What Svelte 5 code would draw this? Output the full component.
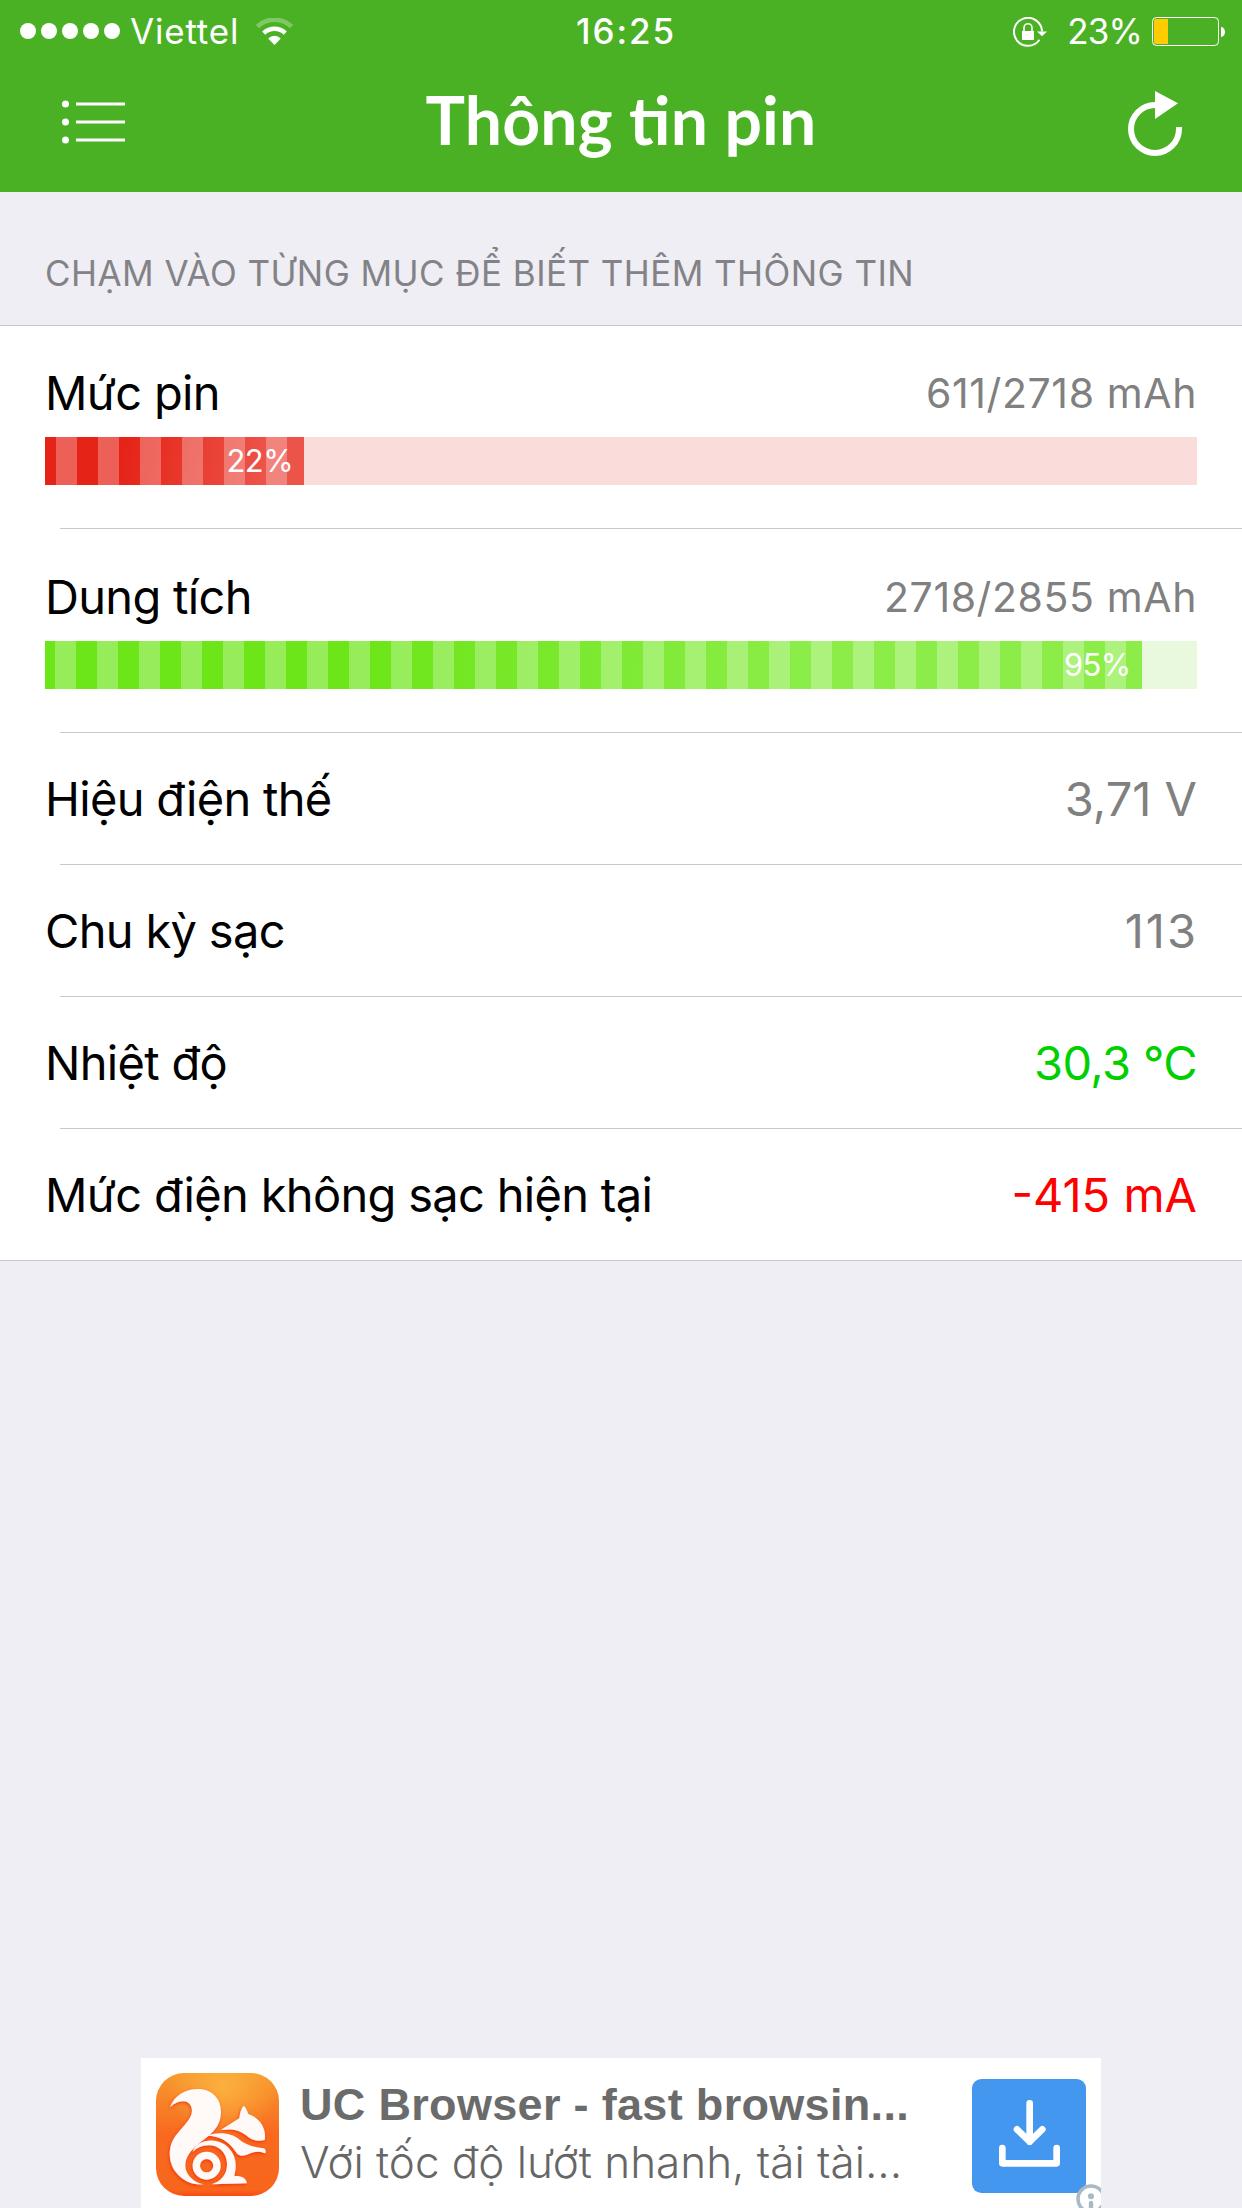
<script lang="ts">
  type Gauge = {
    label: string;
    value: string;
    percent: number;
    fill: number;
    tone: 'red' | 'green';
  };

  type Reading = {
    label: string;
    value: string;
    tone?: 'count' | 'ok' | 'alert';
  };

  const gauges: Gauge[] = [
    { label: 'Mức pin', value: '611/2718 mAh', percent: 22, fill: 22.48, tone: 'red' },
    { label: 'Dung tích', value: '2718/2855 mAh', percent: 95, fill: 95.2, tone: 'green' }
  ];

  const readings: Reading[] = [
    { label: 'Hiệu điện thế', value: '3,71 V' },
    { label: 'Chu kỳ sạc', value: '113', tone: 'count' },
    { label: 'Nhiệt độ', value: '30,3 °C', tone: 'ok' },
    { label: 'Mức điện không sạc hiện tại', value: '-415 mA', tone: 'alert' }
  ];
</script>

<div class="screen">
  <header>
    <div class="status">
      <div class="carrier">
        <div class="signal">
          {#each Array(5) as _, i (i)}
            <span class="dot"></span>
          {/each}
        </div>
        <span class="carrier-name">Viettel</span>
        <svg class="wifi" viewBox="0 0 37 27" width="37" height="27">
          <path d="M1.5 8.6a24.5 24.5 0 0 1 34 0" fill="none" stroke="#fff" stroke-opacity=".3" stroke-width="4.6" />
          <path d="M7.7 15.2a15.5 15.5 0 0 1 21.6 0" fill="none" stroke="#fff" stroke-width="4.4" />
          <path d="M12.2 20.4a9 9 0 0 1 12.6 0L18.5 27z" fill="#fff" />
        </svg>
      </div>
      <span class="clock">16:25</span>
      <div class="power">
        <svg class="lock" viewBox="0 0 34 30" width="34" height="30">
          <path d="M26.5 22.8a14 14 0 1 1 2.5-8.3" fill="none" stroke="#fff" stroke-width="2" />
          <path d="M24 14.5h10L29 19.2z" fill="#fff" />
          <rect x="9" y="14" width="12" height="9" fill="#fff" />
          <path d="M11 14.5v-3.8a4 4 0 0 1 8 0v3.8" fill="none" stroke="#fff" stroke-width="1.6" />
        </svg>
        <span class="power-text">23%</span>
        <svg class="battery" viewBox="0 0 74 29" width="74" height="29">
          <rect x=".5" y=".5" width="66" height="28" rx="4" fill="none" stroke="#fff" />
          <path d="M4 2h12v25H4a2 2 0 0 1-2-2V4a2 2 0 0 1 2-2z" fill="#fc0" />
          <path d="M69 10a4 5 0 0 1 0 10z" fill="#fff" />
        </svg>
      </div>
    </div>
    <div class="nav">
      <svg class="menu" viewBox="0 0 64 44" width="64" height="44">
        {#each [4, 22, 40] as y (y)}
          <circle cx="3.5" cy={y} r="3.5" fill="#fff" />
          <path d="M14 {y}h49" stroke="#fff" stroke-width="3" />
        {/each}
      </svg>
      <h1>Thông <span class="joined">t</span>in pin</h1>
      <svg class="refresh" viewBox="0 0 54 65" width="54" height="65">
        <path d="M27 14a24 24 0 1 0 24 24v-2" fill="none" stroke="#fff" stroke-width="6" />
        <path d="M27 0l23 12.3L27 28z" fill="#fff" />
      </svg>
    </div>
  </header>

  <h2>CHẠM VÀO TỪNG MỤC ĐỂ BIẾT THÊM THÔNG TIN</h2>

  <ul class="list">
    {#each gauges as gauge (gauge.label)}
      <li class="row row--gauge">
        <div class="line">
          <span class="label">{gauge.label}</span>
          <span class="value value--small">{gauge.value}</span>
        </div>
        <div class="track {gauge.tone}">
          <div class="fill" style="width: {gauge.fill}%">{gauge.percent}%</div>
        </div>
      </li>
    {/each}
    {#each readings as reading (reading.label)}
      <li class="row">
        <div class="line">
          <span class="label">{reading.label}</span>
          <span class="value {reading.tone ?? ''}">{reading.value}</span>
        </div>
      </li>
    {/each}
  </ul>

  <aside class="banner">
    <svg class="app-icon" viewBox="78 99 369 369" width="123" height="123">
      <defs>
        <linearGradient id="base" x1="0" y1="0" x2="0" y2="1">
          <stop offset="0" stop-color="#f79a2e" />
          <stop offset=".5" stop-color="#f8691f" />
          <stop offset=".95" stop-color="#f8661d" />
          <stop offset="1" stop-color="#fa4a14" />
        </linearGradient>
        <radialGradient id="glow" cx=".55" cy=".1" r=".45">
          <stop offset="0" stop-color="#fbb03e" />
          <stop offset="1" stop-color="#fbb03e" stop-opacity="0" />
        </radialGradient>
        <filter id="shade" x="-10%" y="-10%" width="120%" height="120%">
          <feDropShadow dx="-2" dy="4" stdDeviation="5" flood-color="#f02a00" flood-opacity=".85" />
        </filter>
      </defs>
      <rect x="78" y="99" width="369" height="369" rx="84" fill="url(#base)" />
      <rect x="78" y="99" width="369" height="369" rx="84" fill="url(#glow)" />
      <g fill="#fffaf8" filter="url(#shade)">
        <path d="M120 202C132 167 166 147 203 147c44 0 70 30 70 68 0 50-36 70-64 94-28 23-43 42-43 68 0 26 24 50 56 56-32 3-60-8-79-30-20-22-26-48-23-74 4-32 25-52 44-74 17-20 26-36 20-54-7-22-38-24-64 1z" />
        <path d="M272 270l56-35c2-18 6-30 13-38 7 7 11 15 14 25 31 10 56 41 49 78-23 6-41 0-56-14-20-17-44-20-76-16z" />
        <path d="M232 287c36-13 74-8 97 12 21 17 46 23 73 26 5 4 6 9 4 15-17-8-32-6-50 2-17 8-31 7-38-5-20-33-48-49-86-50z" />
        <path d="M188 335c8-22 32-35 62-33 42 3 72 42 67 84l-4 22c22-1 35 5 38 22l-107 3c30-9 48-31 47-62-1-34-26-56-56-55-19 1-34 7-47 19z" />
        <circle cx="230" cy="377" r="31" fill="none" stroke="#fffaf8" stroke-width="22" />
      </g>
    </svg>
    <div class="ad-text">
      <strong>UC Browser - fast browsin...</strong>
      <p>Với tốc độ lướt nhanh, tải tài...</p>
    </div>
    <svg class="download" viewBox="216 117 342 342" width="114" height="114">
      <rect x="216" y="117" width="342" height="342" rx="28" fill="#4497ee" />
      <g fill="none" stroke="#fff" stroke-width="20" stroke-linecap="round" stroke-linejoin="round">
        <path d="M389 190v115M351 268l38 37 38-37" />
        <path d="M307 324v46h163v-46" />
      </g>
    </svg>
    <svg class="info" viewBox="0 0 30 30" width="30" height="30">
      <circle cx="15" cy="15" r="13" fill="#fff" stroke="#a9bac4" stroke-width="3.6" />
      <circle cx="15" cy="12.3" r="3" fill="#a9bac4" />
      <path d="M15 19v7" stroke="#a9bac4" stroke-width="4.4" stroke-linecap="round" />
    </svg>
  </aside>
</div>

<style>
  :global(body) {
    margin: 0;
    background: #efeef4;
  }

  .screen {
    width: 1242px;
    height: 2208px;
    display: flex;
    flex-direction: column;
    overflow: hidden;
    background: #efeef4;
    font-family: Inter, 'Liberation Sans', sans-serif;
  }

  header {
    height: 192px;
    background: #4ab125;
    color: #fff;
  }

  .status {
    height: 60px;
    display: grid;
    grid-template-columns: 1fr auto 1fr;
    align-items: center;
    padding: 0 16px 0 20px;
    box-sizing: border-box;
    font-size: 35px;
    line-height: 62px;
  }

  .carrier,
  .power,
  .signal {
    display: flex;
    align-items: center;
  }

  .signal {
    gap: 5px;
  }

  .dot {
    width: 16px;
    height: 16px;
    border-radius: 50%;
    background: #fff;
  }

  .carrier-name {
    margin-left: 10px;
    letter-spacing: 0.8px;
  }

  .wifi {
    margin-left: 17px;
  }

  .clock {
    margin-left: 6px;
    font-weight: 500;
    letter-spacing: 1.9px;
  }

  .power {
    justify-content: flex-end;
  }

  .lock {
    margin-top: 1px;
  }

  .power-text {
    margin: 0 10px 0 20px;
    letter-spacing: -0.9px;
  }

  .battery {
    margin-top: 1px;
  }

  .nav {
    height: 132px;
    display: grid;
    grid-template-columns: 1fr auto 1fr;
    align-items: center;
    padding: 0 60px 8px;
    box-sizing: border-box;
  }

  .menu {
    margin-left: 2px;
  }

  .refresh {
    justify-self: end;
    margin-top: 2px;
  }

  h1 {
    margin: 0 0 4px;
    font-family: Lato, sans-serif;
    font-size: 66px;
    font-weight: 700;
    line-height: 80px;
    letter-spacing: 0.2px;
  }

  .joined {
    position: relative;
  }

  /* bridges the crossbar of the t to the stem of the i */
  .joined::after {
    content: '';
    position: absolute;
    top: 31px;
    left: calc(100% - 5px);
    width: 11px;
    height: 6px;
    background: #fff;
  }

  h2 {
    height: 133px;
    margin: 0;
    padding: 57px 45px 0;
    box-sizing: border-box;
    font-size: 35px;
    font-weight: 400;
    line-height: 48px;
    letter-spacing: 0.44px;
    color: #838387;
    white-space: nowrap;
  }

  .list {
    margin: 0;
    padding: 0;
    list-style: none;
    background: #fff;
    border-top: 1px solid #c8c7cc;
    border-bottom: 1px solid #c8c7cc;
  }

  .row {
    height: 132px;
    margin-left: 60px;
    padding-right: 45px;
    box-sizing: border-box;
    border-bottom: 1px solid #c8c7cc;
    display: flex;
    flex-direction: column;
    justify-content: center;
  }

  .row:last-child {
    height: 131px;
    border-bottom: none;
  }

  .row--gauge {
    height: 204px;
    justify-content: flex-end;
    padding-bottom: 43px;
  }

  .row--gauge:first-child {
    height: 203px;
  }

  .line {
    margin-left: -15px;
    display: flex;
    justify-content: space-between;
    align-items: center;
    line-height: 60px;
  }

  .row--gauge .line {
    margin-bottom: 14px;
  }

  .label,
  .value {
    font-size: 47px;
    white-space: nowrap;
  }

  .label {
    color: #000;
    letter-spacing: -0.68px;
  }

  .value {
    color: #808080;
  }

  .value--small {
    font-size: 41px;
    letter-spacing: 0.6px;
  }

  .count {
    letter-spacing: 2px;
    margin-right: -1px;
  }

  .ok {
    color: #00cf00;
    letter-spacing: -0.6px;
  }

  .alert {
    color: #f00;
  }

  .track {
    height: 48px;
    margin-left: -15px;
  }

  .fill {
    height: 48px;
    padding-right: 11px;
    box-sizing: border-box;
    color: #fff;
    font-size: 31px;
    line-height: 48px;
    letter-spacing: -0.6px;
    text-align: right;
  }

  .red {
    background: #faddda;
  }

  .red .fill {
    background:
      repeating-linear-gradient(90deg, #fff0 0 21px, #ffffff47 21px 42px) -10px 0 / 2000px,
      linear-gradient(100deg, #e62317 30%, #ec544a 85%);
  }

  .green {
    background: #e8f9dd;
  }

  .green .fill {
    background:
      repeating-linear-gradient(90deg, #fff0 0 21px, #ffffff47 21px 42px) -11px 0 / 2000px,
      linear-gradient(95deg, #6de619 30%, #8ced49 70%);
  }

  .banner {
    position: relative;
    width: 960px;
    height: 150px;
    margin: auto auto 0;
    padding: 15px;
    box-sizing: border-box;
    display: flex;
    align-items: flex-start;
    overflow: hidden;
    background: #fff;
  }

  .ad-text {
    flex: 1;
    margin-left: 21px;
    white-space: nowrap;
  }

  .ad-text strong {
    display: block;
    font-family: 'Liberation Sans', sans-serif;
    font-size: 45px;
    line-height: 64px;
    letter-spacing: 0.32px;
    color: #6b6b6b;
  }

  .ad-text p {
    margin: 0;
    font-size: 44px;
    font-weight: 300;
    line-height: 50px;
    color: #666;
  }

  .download {
    margin-top: 6px;
  }

  .info {
    position: absolute;
    right: -5px;
    bottom: -6px;
  }
</style>
